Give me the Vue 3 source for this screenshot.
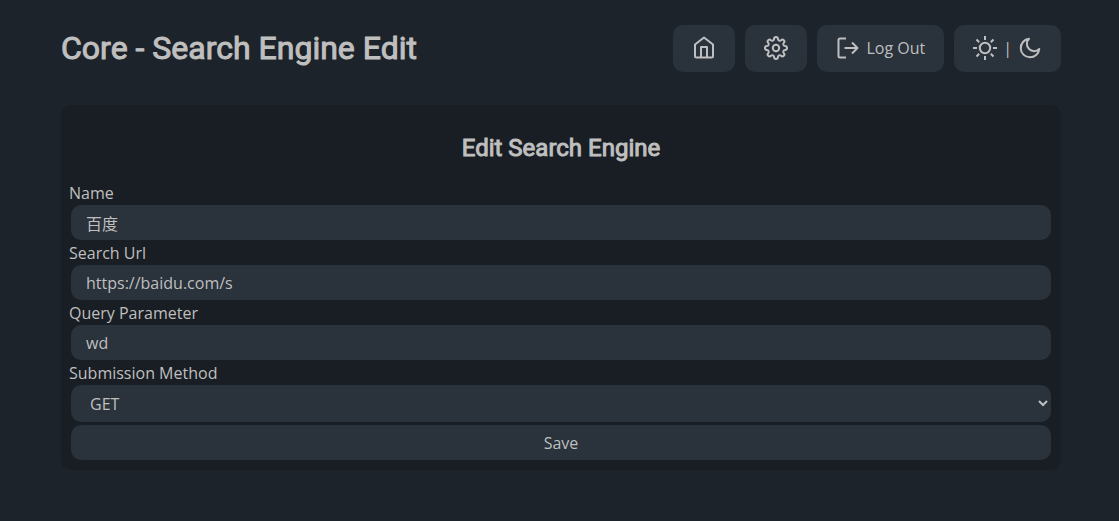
<script setup>
import { ref } from 'vue'

const name = ref('百度')
const url = ref('https://baidu.com/s')
const query = ref('wd')
const method = ref('GET')
</script>

<template>
  <div class="page">
    <header class="header">
      <h1>Core - Search Engine Edit</h1>
      <nav class="actions">
        <a class="btn" href="#" aria-label="Home">
          <svg class="icon" viewBox="0 0 24 24">
            <path d="M3 8.500 12 1.500l9 7V20a1.500 1.500 0 0 1-1.500 1.500h-15A1.500 1.500 0 0 1 3 20z" />
            <path d="M9 21.500V11h6v10.500" />
          </svg>
        </a>
        <a class="btn" href="#" aria-label="Settings">
          <svg class="icon" viewBox="0 0 24 24">
            <circle cx="12" cy="12" r="3.200" />
            <path d="M10.100 2.900A1.900 1.900 0 0 1 13.900 2.900A1.900 1.900 0 0 0 17.090 4.220A1.900 1.900 0 0 1 19.780 6.910A1.900 1.900 0 0 0 21.100 10.100A1.900 1.900 0 0 1 21.100 13.900A1.900 1.900 0 0 0 19.780 17.090A1.900 1.900 0 0 1 17.090 19.780A1.900 1.900 0 0 0 13.900 21.100A1.900 1.900 0 0 1 10.100 21.100A1.900 1.900 0 0 0 6.910 19.780A1.900 1.900 0 0 1 4.220 17.090A1.900 1.900 0 0 0 2.900 13.900A1.900 1.900 0 0 1 2.900 10.100A1.900 1.900 0 0 0 4.220 6.910A1.900 1.900 0 0 1 6.910 4.220A1.900 1.900 0 0 0 10.100 2.900z" />
          </svg>
        </a>
        <button class="btn" type="button">
          <svg class="icon" viewBox="0 0 24 24">
            <path d="M10 2.500H4a1.500 1.500 0 0 0-1.500 1.500v16A1.500 1.500 0 0 0 4 21.500h6M8.500 12h13M16 6.500l5.500 5.500-5.500 5.500" />
          </svg>
          <span>Log Out</span>
        </button>
        <button class="btn" type="button" aria-label="Toggle theme">
          <svg class="icon" viewBox="0 0 24 24">
            <circle cx="12" cy="12" r="5.200" />
            <path d="M12 0v4M12 20V24M0 12h4M20 12H24M3.500 3.500l2.700 2.700M17.800 17.800l2.700 2.700M20.500 3.500l-2.700 2.700M6.200 17.800l-2.700 2.700" />
          </svg>
          <span>|</span>
          <svg class="icon" viewBox="0 0 24 24">
            <path d="M11 2.800A9.300 9.300 0 1 0 21.300 13 7.200 7.200 0 0 1 11 2.800z" />
          </svg>
        </button>
      </nav>
    </header>

    <main class="panel">
      <h2>Edit Search Engine</h2>
      <form @submit.prevent>
        <label for="name">Name</label>
        <input id="name" v-model="name" type="text" />
        <label for="url">Search Url</label>
        <input id="url" v-model="url" type="text" />
        <label for="query">Query Parameter</label>
        <input id="query" v-model="query" type="text" />
        <label for="method">Submission Method</label>
        <select id="method" v-model="method">
          <option>GET</option>
          <option>POST</option>
        </select>
        <button class="save" type="submit">Save</button>
      </form>
    </main>
  </div>
</template>

<style>
html {
  background: #1d232a;
  color-scheme: dark;
}
</style>

<style scoped>
.page {
  box-sizing: border-box;
  padding: 25px 58px 24px 61px;
  color: #bfbfbf;
  font: 16px/24px "Open Sans", "Noto Sans CJK SC", sans-serif;
}
.header {
  display: flex;
  justify-content: space-between;
  align-items: center;
  margin-bottom: 33px;
}
h1,
h2 {
  margin: 0;
  font-family: Roboto, sans-serif;
  font-weight: 400;
  -webkit-text-stroke: 1px currentColor;
}
h1 {
  padding-bottom: 2px;
  font-size: 32px;
  line-height: 40px;
}
h2 {
  padding: 24px 0 13px;
  font-size: 24px;
  line-height: 38px;
  text-align: center;
}
.actions {
  display: flex;
  gap: 10px;
}
.btn {
  box-sizing: border-box;
  display: flex;
  align-items: center;
  gap: 6px;
  height: 47px;
  padding: 0 19px 1px;
  border: 0;
  border-radius: 10px;
  background: #2a323b;
  color: inherit;
  font: inherit;
}
.btn span {
  padding-bottom: 1px;
}
.icon {
  width: 24px;
  height: 24px;
  fill: none;
  stroke: currentColor;
  stroke-width: 2;
  stroke-linejoin: round;
}
.panel {
  padding: 0 8px 10px;
  border-radius: 10px;
  background: #191e24;
}
form {
  display: flex;
  flex-direction: column;
}
label {
  padding-top: 2px;
  line-height: 23px;
}
input,
select,
.save {
  box-sizing: border-box;
  height: 35px;
  margin: 0 2px;
  padding: 0 15px;
  border: 0;
  border-radius: 10px;
  background: #2a323b;
  color: inherit;
  font: inherit;
}
select {
  height: 37px;
  padding-right: 0;
}
.save {
  margin-top: 3px;
}
</style>
